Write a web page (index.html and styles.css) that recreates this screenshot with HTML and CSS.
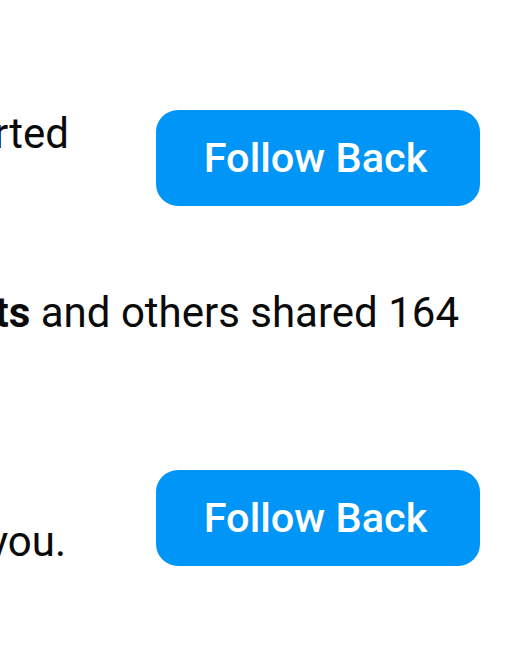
FILE: index.html
```html
<!DOCTYPE html>
<html lang="en">
<head>
<meta charset="utf-8">
<title>Notifications</title>
<link rel="stylesheet" href="styles.css">
</head>
<body>
  <main class="feed">
    <section class="row row-top">
      <div class="clip clip-1"><span class="line">user_name started</span></div>
      <button class="follow follow-1">Follow Back</button>
    </section>
    <section class="row row-mid">
      <div class="clip clip-2"><span class="line"><b>friends_posts</b> and others shared 164</span></div>
    </section>
    <section class="row row-bottom">
      <div class="clip clip-3"><span class="line">started following you.</span></div>
      <button class="follow follow-3">Follow Back</button>
    </section>
  </main>
</body>
</html>
```
FILE: styles.css
```css
html, body {
  margin: 0;
  padding: 0;
  background: #ffffff;
}
body {
  width: 528px;
  height: 647px;
  overflow: hidden;
  font-family: Roboto, "Noto Sans", "Liberation Sans", sans-serif;
  color: #0a0a0a;
}
.feed {
  display: flex;
  flex-direction: column;
}
.row {
  display: flex;
}
.row-top {
  margin-top: 110px;
  height: 96px;
  align-items: flex-start;
}
.row-mid {
  margin-top: 83px;
  height: 48px;
}
.row-bottom {
  margin-top: 133px;
  height: 96px;
  align-items: flex-end;
}
.clip {
  display: flex;
  justify-content: flex-end;
  overflow: hidden;
  flex: none;
}
.line {
  white-space: nowrap;
  font-size: 42px;
  line-height: 48px;
  font-weight: 400;
}
.line b {
  font-weight: 700;
}
.clip-1 { width: 69px; }
.clip-2 { width: 459px; }
.clip-3 { width: 66px; }
.follow {
  flex: none;
  width: 324px;
  height: 96px;
  border: none;
  border-radius: 22px;
  background: #0095f6;
  color: #ffffff;
  font-family: Roboto, "Noto Sans", "Liberation Sans", sans-serif;
  font-size: 41.5px;
  font-weight: 500;
  padding: 0 5px 2px 0;
}
.follow-1 { margin-left: 87px; }
.follow-3 { margin-left: 90px; }
```
